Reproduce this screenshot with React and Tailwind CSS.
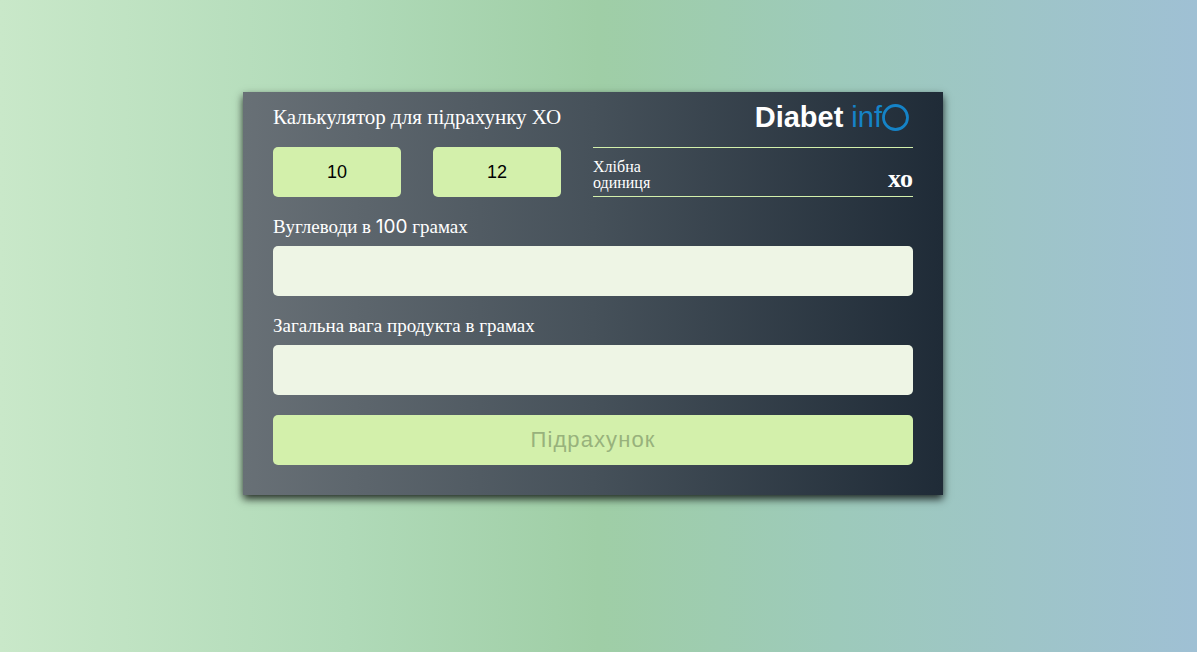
import { useState } from "react";

function RatioButton({ value, onSelect }) {
  return (
    <button
      type="button"
      onClick={() => onSelect(value)}
      className="h-[50px] rounded-[5px] bg-[#d3f0ab] font-['Liberation_Sans',sans-serif] text-lg text-black"
    >
      {value}
    </button>
  );
}

function Field({ id, label, value, onChange }) {
  return (
    <div className="mt-5">
      <label htmlFor={id} className="block h-[29px] text-[19px] leading-5">
        {label}
      </label>
      <input
        id={id}
        type="text"
        inputMode="decimal"
        value={value}
        onChange={(e) => onChange(e.target.value)}
        className="block h-[50px] w-full rounded-[5px] bg-[#eef5e5] px-4 text-lg text-black"
      />
    </div>
  );
}

function Logo() {
  return (
    <div className="flex h-[30px] items-center pr-1 font-['Liberation_Sans',sans-serif] text-[29px] leading-[30px]">
      <span className="font-bold">Diabet</span>
      <span className="ml-2 text-[#1583c7]">inf</span>
      <svg viewBox="0 0 27 27" className="size-[27px]" aria-hidden="true">
        <circle cx="13.5" cy="13.5" r="12" fill="none" stroke="#1583c7" strokeWidth="2.8" />
      </svg>
    </div>
  );
}

export default function App() {
  const [ratio, setRatio] = useState(null);
  const [carbs, setCarbs] = useState("");
  const [weight, setWeight] = useState("");
  const [result, setResult] = useState("");
  const ready = ratio && carbs && weight;

  const calculate = (e) => {
    e.preventDefault();
    if (ready) setResult(((carbs * weight) / 100 / ratio).toFixed(1));
  };

  return (
    <main className="min-h-screen bg-[linear-gradient(90deg,#c9e8c9_0%,#b0dab8_29%,#9fcea6_50%,#9dcabb_70%,#9fc0d4_100%)] pt-[92px] pr-[11px] font-['Liberation_Serif',serif] text-white">
      <form
        onSubmit={calculate}
        className="mx-auto w-full max-w-[700px] bg-[linear-gradient(90deg,#687076_0%,#46515a_50%,#1f2b37_100%)] px-[30px] pt-2.5 pb-[30px] shadow-[0_4px_8px_rgba(0,0,0,0.8)]"
      >
        <header className="flex items-center justify-between">
          <h1 className="text-[21px] leading-[30px]">Калькулятор для підрахунку ХО</h1>
          <Logo />
        </header>
        <div className="mt-[15px] grid grid-cols-[1fr_1fr_2.5fr] gap-8">
          <RatioButton value={10} onSelect={setRatio} />
          <RatioButton value={12} onSelect={setRatio} />
          <div className="flex h-[50px] items-end justify-between border-y border-[#d3f0ab]">
            <p className="pb-[5px] text-base leading-4">
              Хлібна
              <br />
              одиниця
            </p>
            <p className="pb-[5px] text-[26px] leading-6 font-bold">
              <output>{result}</output> хо
            </p>
          </div>
        </div>
        <Field
          id="carbs"
          label={
            <>
              Вуглеводи в <span className="font-['Inter',sans-serif]">100</span> грамах
            </>
          }
          value={carbs}
          onChange={setCarbs}
        />
        <Field id="weight" label="Загальна вага продукта в грамах" value={weight} onChange={setWeight} />
        <button
          type="submit"
          disabled={!ready}
          className="mt-5 block h-[50px] w-full rounded-[5px] bg-[#d3f0ab] pb-0.5 font-['Liberation_Sans',sans-serif] text-[22px] tracking-wider text-black disabled:text-[#98b27c]"
        >
          Підрахунок
        </button>
      </form>
    </main>
  );
}
